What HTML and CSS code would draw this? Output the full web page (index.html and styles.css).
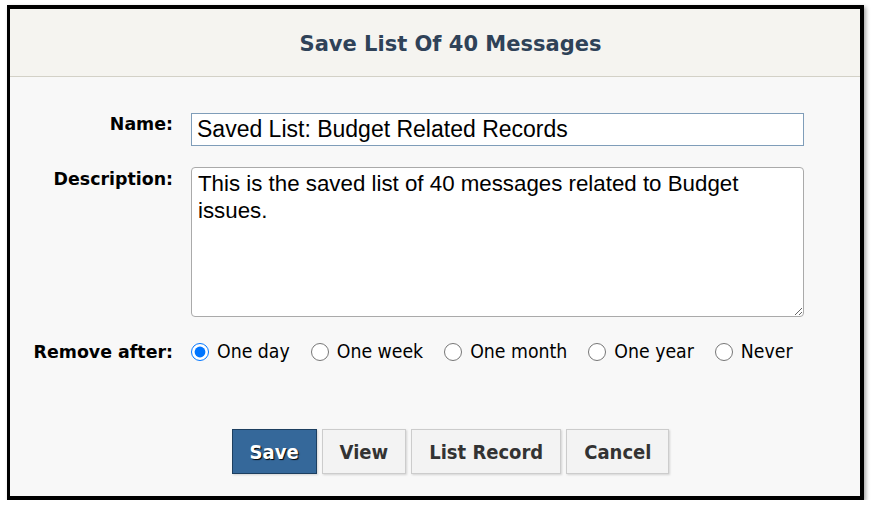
FILE: index.html
```html
<!DOCTYPE html>
<html lang="en">
<head>
    <meta charset="UTF-8">
    <meta name="viewport" content="width=device-width, initial-scale=1.0">
    <title>Save List Of 40 Messages</title>
    <link rel="stylesheet" href="styles.css">
</head>
<body>
    <div class="dialog">
        <div class="dialog-header">
            <h1>Save List Of 40 Messages</h1>
        </div>
        <form class="dialog-body">
            <label class="field-label" for="name">Name:</label>
            <input id="name" class="text-input" type="text" value="Saved List: Budget Related Records">

            <label class="field-label" for="desc">Description:</label>
            <textarea id="desc" class="text-area">This is the saved list of 40 messages related to Budget issues.</textarea>

            <span class="field-label label-remove">Remove after:</span>
            <div class="radio-group">
                <label class="radio"><input type="radio" name="remove" checked> One day</label>
                <label class="radio"><input type="radio" name="remove"> One week</label>
                <label class="radio"><input type="radio" name="remove"> One month</label>
                <label class="radio"><input type="radio" name="remove"> One year</label>
                <label class="radio"><input type="radio" name="remove"> Never</label>
            </div>
        </form>
        <div class="dialog-buttons">
            <button class="btn btn-primary">Save</button>
            <button class="btn">View</button>
            <button class="btn">List Record</button>
            <button class="btn">Cancel</button>
        </div>
    </div>
</body>
</html>
```

FILE: styles.css
```css
body {
    margin: 0;
    background-color: #fff;
    font-family: "DejaVu Sans", sans-serif;
}
.dialog {
    margin: 5px 0 0 7px;
    width: 850px;
    height: 487px;
    border: 3px solid #000;
    border-top-width: 4px;
    border-right-width: 4px;
    border-bottom-width: 4px;
    background-color: #f8f8f8;
    box-shadow: 2px 2px 4px rgba(0, 0, 0, 0.35);
    display: flex;
    flex-direction: column;
}
.dialog-header {
    height: 67px;
    padding-left: 31px;
    background-color: #f5f4f0;
    border-bottom: 1px solid #d3d1c7;
    display: flex;
    align-items: center;
    justify-content: center;
}
.dialog-header h1 {
    margin: 0;
    padding-top: 2px;
    font-size: 21px;
    font-weight: bold;
    color: #2f4258;
}
.dialog-body {
    display: grid;
    grid-template-columns: 163px 613px;
    column-gap: 18px;
    row-gap: 22px;
    padding-top: 36px;
}
.field-label {
    text-align: right;
    font-weight: bold;
    font-size: 17.4px;
    color: #000;
    padding-top: 1px;
}
.label-remove {
    padding-top: 3px;
}
.text-input {
    box-sizing: border-box;
    height: 33px;
    margin: 0;
    padding: 0 5px;
    border: 1px solid #7f9db9;
    background: #fff;
    font-family: "Liberation Sans", Arial, sans-serif;
    font-size: 23px;
    color: #000;
}
.text-area {
    box-sizing: border-box;
    height: 150px;
    margin: 0;
    margin-top: -1px;
    padding: 2px 6px;
    border: 1px solid #aaa;
    border-radius: 4px;
    background: #fff;
    font-family: "Liberation Sans", Arial, sans-serif;
    font-size: 22.3px;
    line-height: 27px;
    color: #000;
    resize: vertical;
}
.radio-group {
    display: flex;
    gap: 21px;
    margin-top: 1px;
}
.radio {
    display: flex;
    align-items: center;
    gap: 8px;
    font-family: "DejaVu Sans Condensed", "DejaVu Sans", sans-serif;
    font-size: 19.3px;
    color: #000;
}
.radio input {
    width: 18px;
    height: 18px;
    margin: 0;
}
.dialog-buttons {
    display: flex;
    justify-content: center;
    gap: 5px;
    margin-top: 66px;
    padding-left: 31px;
}
.btn {
    height: 45px;
    padding: 0 17px;
    border: 1px solid #ccc;
    background-color: #f3f3f3;
    font-family: "DejaVu Sans Condensed", "DejaVu Sans", sans-serif;
    font-size: 20px;
    font-weight: bold;
    color: #333;
    cursor: pointer;
    box-shadow: 1px 1px 2px rgba(0, 0, 0, 0.15);
}
.btn-primary {
    background-color: #35689a;
    border-color: #1d3f60;
    color: #fff;
    text-shadow: 1px 1px 1px #000;
}
```
